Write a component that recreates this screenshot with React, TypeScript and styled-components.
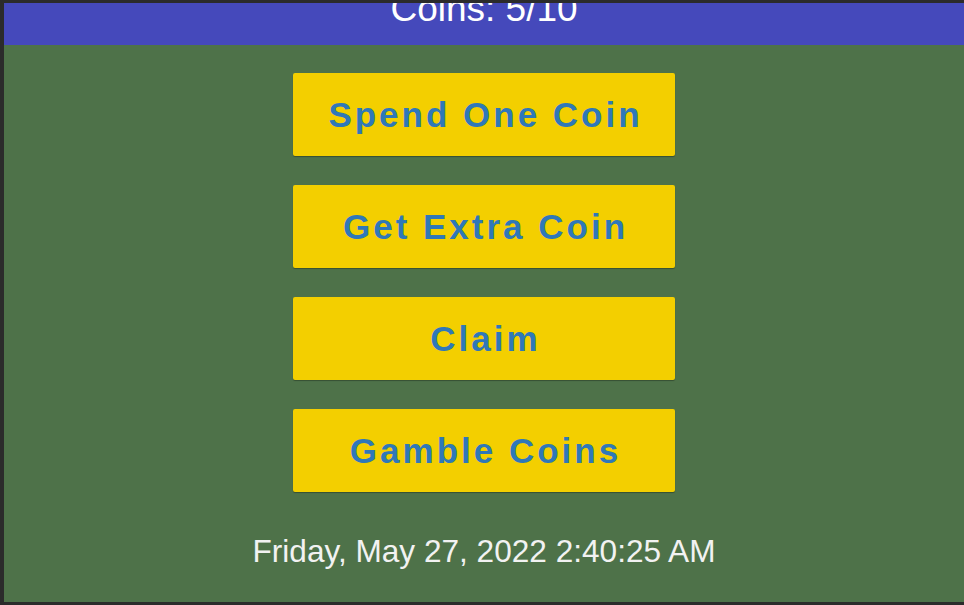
import React from 'react';
import styled, { createGlobalStyle } from 'styled-components';

const GlobalStyle = createGlobalStyle`
  html, body {
    margin: 0;
    height: 100%;
    background: #2b2b2b;
    overflow: hidden;
  }
  #root {
    height: 100%;
  }
`;

const Frame = styled.div`
  height: 100%;
  box-sizing: border-box;
  padding: 3px 0 3px 4px;
  display: flex;
`;

const Page = styled.div`
  flex: 1;
  display: flex;
  flex-direction: column;
  background: #4e7249;
  font-family: 'Liberation Sans', Arial, sans-serif;
`;

const Header = styled.header`
  height: 42px;
  background: #4549bb;
  overflow: hidden;
  text-align: center;
`;

const Title = styled.h1`
  margin: -15px 0 0;
  font-size: 37px;
  font-weight: 400;
  line-height: 1.15;
  color: #ffffff;
`;

const Actions = styled.div`
  display: flex;
  flex-direction: column;
  align-items: center;
  gap: 29px;
  padding-top: 28px;
`;

const ActionButton = styled.button`
  width: 382px;
  height: 83px;
  border: none;
  border-radius: 2px;
  background: #f3cf00;
  box-shadow: 0 1px 1px rgba(0, 0, 0, 0.3);
  color: #2f78b8;
  font-family: inherit;
  font-size: 35px;
  font-weight: 700;
  letter-spacing: 3px;
  text-indent: 3px;
  cursor: pointer;
`;

const Clock = styled.p`
  margin: 41px 0 0;
  text-align: center;
  font-size: 31.6px;
  line-height: 1.15;
  color: #f2f2f2;
`;

const actions = ['Spend One Coin', 'Get Extra Coin', 'Claim', 'Gamble Coins'];

const App = () => {
  return (
    <>
      <GlobalStyle />
      <Frame>
        <Page>
          <Header>
            <Title>Coins: 5/10</Title>
          </Header>
          <Actions>
            {actions.map((label) => (
              <ActionButton key={label}>{label}</ActionButton>
            ))}
          </Actions>
          <Clock>Friday, May 27, 2022 2:40:25 AM</Clock>
        </Page>
      </Frame>
    </>
  );
};

export default App;
